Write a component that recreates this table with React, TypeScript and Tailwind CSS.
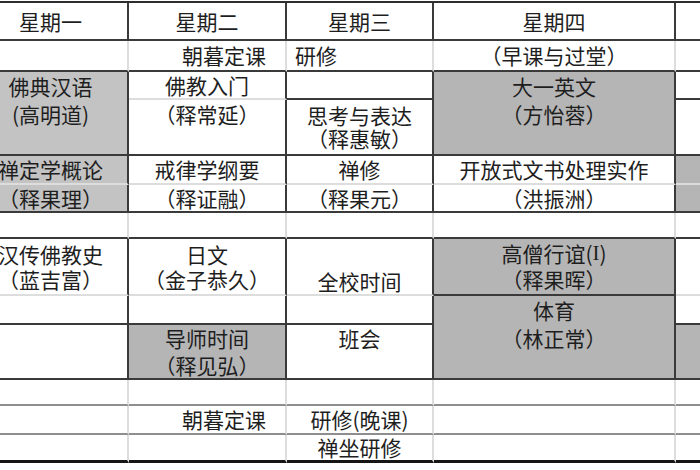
import type { ReactNode } from "react";

// border helpers, written out in full so Tailwind picks them up
const rD = "border-r-2 border-r-[#3a3a3a]";
const rL = "border-r-2 border-r-[#dddddd]";
const bD = "border-b-2 border-b-[#3a3a3a]";
const bL = "border-b-2 border-b-[#dddddd]";
const bM = "border-b-2 border-b-[#8e8e8e]";
const bK = "border-b-[3px] border-b-[#151515]";
const grayA = "bg-[#c3c3c3]";
const grayB = "bg-[#b5b5b5]";

function Cell({ className, children }: { className: string; children?: ReactNode }) {
  return <div className={`flex min-w-0 flex-col ${className}`}>{children}</div>;
}

function Line({ className = "", children }: { className?: string; children: ReactNode }) {
  return (
    <div className={`flex shrink-0 items-center justify-center whitespace-nowrap ${className}`}>
      {children}
    </div>
  );
}

export default function App() {
  return (
    <div className="h-[470px] w-[700px] overflow-hidden bg-white pt-px font-['Noto_Sans_CJK_SC',sans-serif] text-[21px] leading-none text-[#1e1e1e]">
      <div className="-ml-[26px] grid w-[826px] grid-cols-[155px_158px_147px_242px_124px] grid-rows-[38px_31px_28px_28px_28px_29px_28px_26px_29px_28px_29px_27px_28px_26px_29px_28px] border-t-2 border-t-[#2e2e2e]">
        {/* 星期一 */}
        <Cell className={`col-start-1 row-start-1 justify-center ${rD} ${bD}`}>
          <Line>星期一</Line>
        </Cell>
        <Cell className={`col-start-1 row-start-2 ${rL} ${bD}`} />
        <Cell className={`col-start-1 row-start-3 row-span-3 ${grayA} ${rD} ${bD}`}>
          <Line className="h-[28px]">佛典汉语</Line>
          <Line className="h-[28px]">(高明道)</Line>
        </Cell>
        <Cell className={`col-start-1 row-start-6 justify-center ${grayA} ${rD} ${bL}`}>
          <Line>禅定学概论</Line>
        </Cell>
        <Cell className={`col-start-1 row-start-7 justify-center ${grayA} ${rD} ${bD}`}>
          <Line>（释果理）</Line>
        </Cell>
        <Cell className={`col-start-1 row-start-8 ${rL} ${bD}`} />
        <Cell className={`col-start-1 row-start-9 row-span-2 justify-center ${rD} ${bL}`}>
          <Line className="h-[25px]">汉传佛教史</Line>
          <Line className="h-[25px]">（蓝吉富）</Line>
        </Cell>
        <Cell className={`col-start-1 row-start-11 ${rD} ${bD}`} />
        <Cell className={`col-start-1 row-start-12 row-span-2 ${rD} ${bD}`} />
        <Cell className={`col-start-1 row-start-14 ${rL} ${bM}`} />
        <Cell className={`col-start-1 row-start-15 ${rL} ${bM}`} />
        <Cell className={`col-start-1 row-start-16 ${rL} ${bK}`} />

        {/* 星期二 */}
        <Cell className={`col-start-2 row-start-1 justify-center ${rD} ${bD}`}>
          <Line>星期二</Line>
        </Cell>
        <Cell className={`col-start-2 row-start-2 justify-center ${rL} ${bD}`}>
          <Line className="justify-end pr-[19px]">朝暮定课</Line>
        </Cell>
        <Cell className={`col-start-2 row-start-3 justify-center ${rD} ${bL}`}>
          <Line>佛教入门</Line>
        </Cell>
        <Cell className={`col-start-2 row-start-4 row-span-2 ${rD} ${bD}`}>
          <Line className="h-[28px]">（释常延）</Line>
        </Cell>
        <Cell className={`col-start-2 row-start-6 justify-center ${rD} ${bL}`}>
          <Line>戒律学纲要</Line>
        </Cell>
        <Cell className={`col-start-2 row-start-7 justify-center ${rD} ${bD}`}>
          <Line>（释证融）</Line>
        </Cell>
        <Cell className={`col-start-2 row-start-8 ${rL} ${bD}`} />
        <Cell className={`col-start-2 row-start-9 row-span-2 justify-center ${rD} ${bL}`}>
          <Line className="h-[25px]">日文</Line>
          <Line className="h-[25px]">（金子恭久）</Line>
        </Cell>
        <Cell className={`col-start-2 row-start-11 ${rD} ${bD}`} />
        <Cell className={`col-start-2 row-start-12 row-span-2 ${grayB} ${rD} ${bD}`}>
          <Line className="h-[27px]">导师时间</Line>
          <Line className="h-[26px]">（释见弘）</Line>
        </Cell>
        <Cell className={`col-start-2 row-start-14 ${rL} ${bM}`} />
        <Cell className={`col-start-2 row-start-15 justify-center ${rL} ${bM}`}>
          <Line className="justify-end pr-[19px]">朝暮定课</Line>
        </Cell>
        <Cell className={`col-start-2 row-start-16 ${rL} ${bK}`} />

        {/* 星期三 */}
        <Cell className={`col-start-3 row-start-1 justify-center ${rD} ${bD}`}>
          <Line>星期三</Line>
        </Cell>
        <Cell className={`col-start-3 row-start-2 justify-center ${rL} ${bD}`}>
          <Line className="justify-start pl-[8px]">研修</Line>
        </Cell>
        <Cell className={`col-start-3 row-start-3 ${rD} ${bD}`} />
        <Cell className={`col-start-3 row-start-4 row-span-2 justify-center ${rD} ${bD}`}>
          <Line className="h-[23px]">思考与表达</Line>
          <Line className="h-[23px]">（释惠敏）</Line>
        </Cell>
        <Cell className={`col-start-3 row-start-6 justify-center ${rD} ${bL}`}>
          <Line>禅修</Line>
        </Cell>
        <Cell className={`col-start-3 row-start-7 justify-center ${rD} ${bD}`}>
          <Line>（释果元）</Line>
        </Cell>
        <Cell className={`col-start-3 row-start-8 ${rL} ${bD}`} />
        <Cell className={`col-start-3 row-start-9 ${rD}`} />
        <Cell className={`col-start-3 row-start-10 justify-center ${rD} ${bL}`}>
          <Line>全校时间</Line>
        </Cell>
        <Cell className={`col-start-3 row-start-11 ${rD} ${bD}`} />
        <Cell className={`col-start-3 row-start-12 row-span-2 ${rD} ${bD}`}>
          <Line className="h-[27px]">班会</Line>
        </Cell>
        <Cell className={`col-start-3 row-start-14 ${rL} ${bM}`} />
        <Cell className={`col-start-3 row-start-15 justify-center ${rL} ${bM}`}>
          <Line>研修(晚课)</Line>
        </Cell>
        <Cell className={`col-start-3 row-start-16 justify-center ${rL} ${bK}`}>
          <Line>禅坐研修</Line>
        </Cell>

        {/* 星期四 */}
        <Cell className={`col-start-4 row-start-1 justify-center ${rD} ${bD}`}>
          <Line>星期四</Line>
        </Cell>
        <Cell className={`col-start-4 row-start-2 justify-center ${rL} ${bD}`}>
          <Line>（早课与过堂）</Line>
        </Cell>
        <Cell className={`col-start-4 row-start-3 row-span-3 ${grayB} ${rD} ${bD}`}>
          <Line className="h-[28px]">大一英文</Line>
          <Line className="h-[28px]">（方怡蓉）</Line>
        </Cell>
        <Cell className={`col-start-4 row-start-6 justify-center ${rD} ${bL}`}>
          <Line>开放式文书处理实作</Line>
        </Cell>
        <Cell className={`col-start-4 row-start-7 justify-center ${rD} ${bD}`}>
          <Line>（洪振洲）</Line>
        </Cell>
        <Cell className={`col-start-4 row-start-8 ${rL} ${bD}`} />
        <Cell className={`col-start-4 row-start-9 row-span-2 justify-center ${grayB} ${rD} ${bD}`}>
          <Line className="h-[26px]">
            高僧行谊(<span className="font-['Liberation_Serif',serif]">I</span>)
          </Line>
          <Line className="h-[26px]">（释果晖）</Line>
        </Cell>
        <Cell className={`col-start-4 row-start-11 row-span-3 ${grayB} ${rD} ${bD}`}>
          <Line className="h-[29px]">体育</Line>
          <Line className="h-[27px]">（林正常）</Line>
        </Cell>
        <Cell className={`col-start-4 row-start-14 ${rL} ${bM}`} />
        <Cell className={`col-start-4 row-start-15 ${rL} ${bM}`} />
        <Cell className={`col-start-4 row-start-16 ${rL} ${bK}`} />

        {/* 星期五, cut off at the right edge */}
        <Cell className={`col-start-5 row-start-1 ${bD}`} />
        <Cell className={`col-start-5 row-start-2 ${bD}`} />
        <Cell className={`col-start-5 row-start-3 ${bD}`} />
        <Cell className={`col-start-5 row-start-4 row-span-2 ${bD}`} />
        <Cell className={`col-start-5 row-start-6 ${grayB} ${bL}`} />
        <Cell className={`col-start-5 row-start-7 ${grayB} ${bD}`} />
        <Cell className={`col-start-5 row-start-8 ${bD}`} />
        <Cell className={`col-start-5 row-start-9 row-span-2 ${bL}`} />
        <Cell className={`col-start-5 row-start-11 ${bD}`} />
        <Cell className={`col-start-5 row-start-12 row-span-2 ${grayB} ${bD}`} />
        <Cell className={`col-start-5 row-start-14 ${bM}`} />
        <Cell className={`col-start-5 row-start-15 ${bM}`} />
        <Cell className={`col-start-5 row-start-16 ${bK}`} />
      </div>
    </div>
  );
}
